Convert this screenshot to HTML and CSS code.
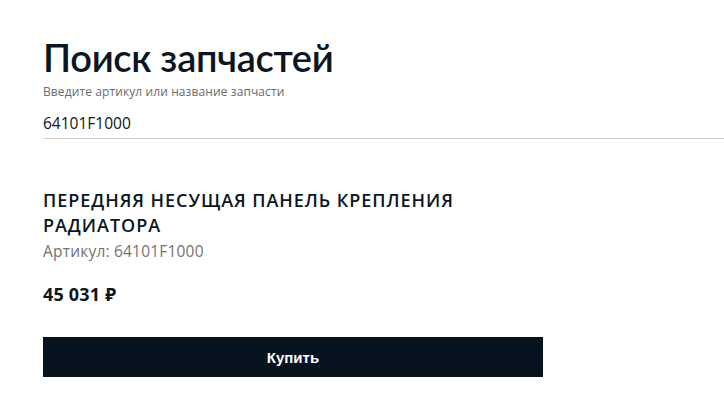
FILE: index.html
```html
<!DOCTYPE html>
<html lang="ru">
<head>
<meta charset="utf-8">
<link rel="stylesheet" href="styles.css">
</head>
<body>
<main class="page">
  <h1 class="title">Поиск запчастей</h1>
  <label class="field">
    <span class="field-label">Введите артикул или название запчасти</span>
    <span class="field-value">64101F1000</span>
  </label>
  <section class="product">
    <h2 class="product-name">ПЕРЕДНЯЯ НЕСУЩАЯ ПАНЕЛЬ КРЕПЛЕНИЯ РАДИАТОРА</h2>
    <div class="product-sku">Артикул: 64101F1000</div>
    <div class="product-price">45 031 ₽</div>
    <button class="buy">Купить</button>
  </section>
</main>
</body>
</html>
```

FILE: styles.css
```css
html, body {
  margin: 0;
  padding: 0;
  background: #ffffff;
}
.page {
  padding: 30px 0 0 43px;
  font-family: "Open Sans", "Noto Sans", sans-serif;
  color: #0b1621;
}
.title {
  margin: 0;
  font-family: Lato, "Open Sans", sans-serif;
  font-size: 38px;
  font-weight: 600;
  line-height: 54px;
  letter-spacing: -0.3px;
}
.field {
  display: flex;
  flex-direction: column;
  border-bottom: 1px solid #cfcfcf;
}
.field-label {
  font-size: 12px;
  letter-spacing: 0.1px;
  color: #6b6b6b;
  line-height: 16px;
}
.field-value {
  font-size: 15.5px;
  line-height: 20px;
  padding: 13px 0 5px;
}
.product {
  width: 500px;
  padding-top: 49px;
}
.product-name {
  margin: 0;
  font-size: 18px;
  font-weight: 600;
  line-height: 25px;
  letter-spacing: 0.95px;
  width: 440px;
}
.product-sku {
  font-size: 15.5px;
  color: #737373;
  line-height: 22px;
  margin-top: 2px;
  letter-spacing: 0.2px;
}
.product-price {
  font-size: 18px;
  font-weight: 700;
  line-height: 22px;
  margin-top: 21px;
  letter-spacing: 0.2px;
}
.buy {
  display: block;
  width: 500px;
  height: 40px;
  margin-top: 32px;
  border: 0;
  background: #07131f;
  color: #ffffff;
  font-family: "Liberation Sans", Arial, sans-serif;
  font-size: 15px;
  font-weight: 700;
  cursor: pointer;
}
```
